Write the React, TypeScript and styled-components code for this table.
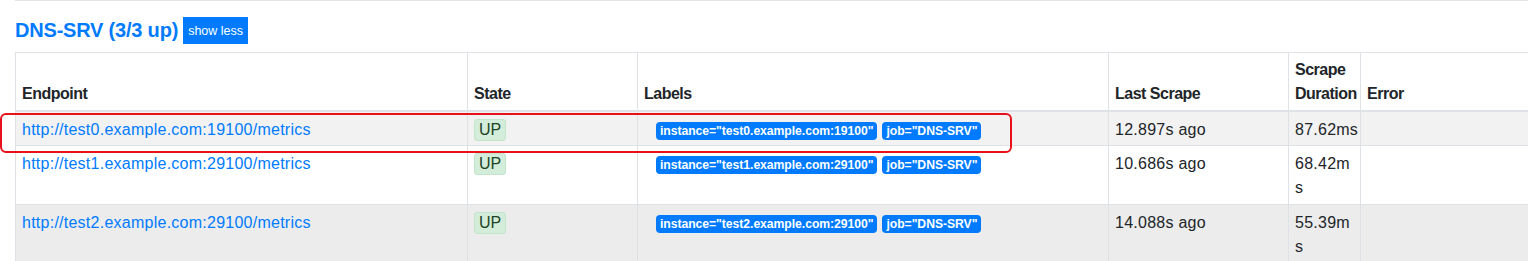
import styled, { createGlobalStyle } from 'styled-components';

const GlobalStyle = createGlobalStyle`
  html, body {
    margin: 0;
    padding: 0;
    background: #fff;
    overflow: hidden;
  }
  body {
    font-family: "Liberation Sans", Arial, sans-serif;
    font-size: 16px;
    line-height: 1.5;
    color: #212529;
  }
`;

const Page = styled.div`
  position: relative;
  padding-left: 15px;
  width: 1600px;
`;

const Divider = styled.div`
  border-top: 1px solid #e3e3e3;
`;

const PoolHeader = styled.div`
  display: flex;
  align-items: center;
  gap: 5px;
  padding-top: 16px;
  margin-bottom: 8px;
`;

const PoolTitle = styled.a`
  font-size: 20px;
  font-weight: 700;
  color: #007bff;
  text-decoration: none;
  letter-spacing: -0.2px;
  line-height: 27px;
`;

const ToggleButton = styled.button`
  border: 0;
  border-radius: 0;
  background: #007bff;
  color: #fff;
  font-family: "Liberation Sans", Arial, sans-serif;
  font-size: 12.5px;
  height: 27px;
  padding: 0 5px;
  cursor: pointer;
`;

const Table = styled.table`
  table-layout: fixed;
  border-collapse: collapse;
  width: 1565px;
`;

const HeadCell = styled.th`
  text-align: left;
  vertical-align: bottom;
  font-weight: 700;
  letter-spacing: -0.5px;
  padding: 5px 6px 3.5px;
  border: 1px solid #dee2e6;
  border-bottom: 2px solid #dee2e6;
`;

const Row = styled.tr<{ $shade?: string }>`
  background: ${(p) => p.$shade || 'transparent'};
`;

const Cell = styled.td`
  vertical-align: top;
  padding: 6px 6px 3.6px;
  border: 1px solid #dee2e6;
  letter-spacing: 0.25px;
  white-space: pre-line;
`;

const EndpointLink = styled.a`
  color: #007bff;
  text-decoration: none;
`;

const StateBadge = styled.span`
  display: inline-block;
  padding: 0 4px;
  line-height: 20px;
  border: 1px solid #c3e6cb;
  border-radius: 3px;
  background: #d4edda;
  color: #1c4526;
  letter-spacing: 0;
`;

const Labels = styled.div`
  display: flex;
  gap: 5px;
  padding: 4px 0 0 12px;
`;

const LabelBadge = styled.span`
  display: inline-block;
  background: #007bff;
  color: #fff;
  font-size: 12.2px;
  font-weight: 700;
  line-height: 12px;
  padding: 3px 4px;
  border-radius: 4px;
  letter-spacing: -0.05px;
  white-space: nowrap;
`;

const Highlight = styled.div`
  position: absolute;
  left: 0;
  top: 113px;
  width: 1012px;
  height: 40px;
  box-sizing: border-box;
  border: 2.5px solid #e8101a;
  border-radius: 6px;
  pointer-events: none;
`;

const targets = [
  { port: '19100', host: 'test0', last: '12.897s ago', duration: '87.62ms', shade: '#f2f2f2' },
  { port: '29100', host: 'test1', last: '10.686s ago', duration: '68.42m\ns', shade: '' },
  { port: '29100', host: 'test2', last: '14.088s ago', duration: '55.39m\ns', shade: '#ececec' },
];

const columns = [
  { name: 'Endpoint', width: 452 },
  { name: 'State', width: 170 },
  { name: 'Labels', width: 471 },
  { name: 'Last Scrape', width: 180 },
  { name: 'Scrape Duration', width: 72 },
  { name: 'Error', width: 220 },
];

export default function App() {
  return (
    <Page>
      <GlobalStyle />
      <Divider />
      <PoolHeader>
        <PoolTitle href="#pool-dns-srv">DNS-SRV (3/3 up)</PoolTitle>
        <ToggleButton>show less</ToggleButton>
      </PoolHeader>
      <Table>
        <colgroup>
          {columns.map((c) => (
            <col key={c.name} style={{ width: c.width }} />
          ))}
        </colgroup>
        <thead>
          <tr>
            {columns.map((c) => (
              <HeadCell key={c.name}>{c.name}</HeadCell>
            ))}
          </tr>
        </thead>
        <tbody>
          {targets.map((t) => {
            const url = `http://${t.host}.example.com:${t.port}/metrics`;
            return (
              <Row key={t.host} $shade={t.shade}>
                <Cell>
                  <EndpointLink href={url}>{url}</EndpointLink>
                </Cell>
                <Cell>
                  <StateBadge>UP</StateBadge>
                </Cell>
                <Cell>
                  <Labels>
                    <LabelBadge>instance="{t.host}.example.com:{t.port}"</LabelBadge>
                    <LabelBadge>job="DNS-SRV"</LabelBadge>
                  </Labels>
                </Cell>
                <Cell>{t.last}</Cell>
                <Cell>{t.duration}</Cell>
                <Cell />
              </Row>
            );
          })}
        </tbody>
      </Table>
      <Highlight />
    </Page>
  );
}
